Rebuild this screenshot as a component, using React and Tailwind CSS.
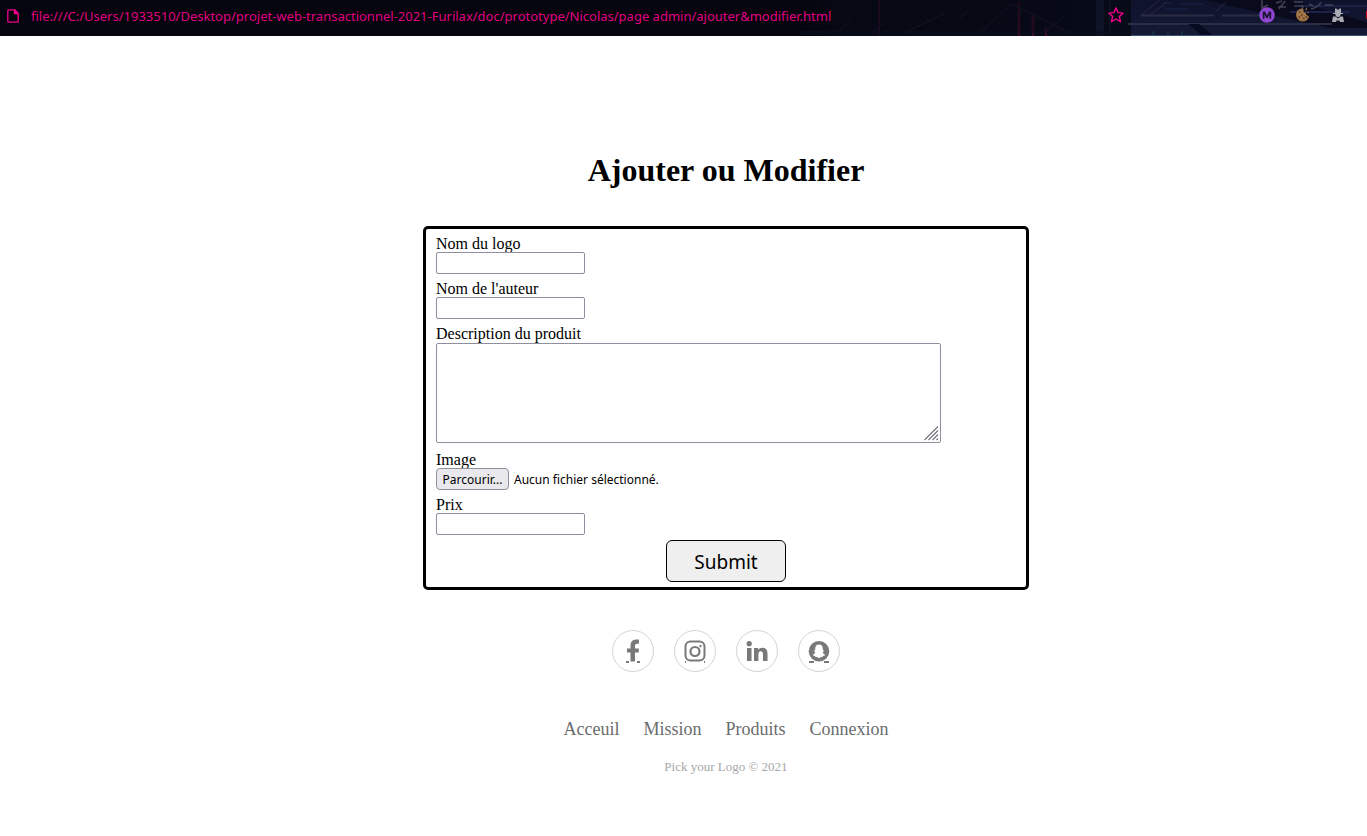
import React from "react";

const serif = "font-['Liberation_Serif','Times_New_Roman',serif]";
const sans = "font-['Noto_Sans','Open_Sans',sans-serif]";
const fieldBorder = "rounded-[2px] border border-[#8f8f9d] bg-white";
const labelText = "h-[18px] leading-5";

function Skyline() {
  return (
    <svg className="absolute right-0 top-0 h-9 w-[567px]" viewBox="800 0 567 36" preserveAspectRatio="none" aria-hidden="true">
      <defs>
        <linearGradient id="night" x1="0" x2="1" y1="0" y2="0">
          <stop offset="0" stopColor="#04050e" />
          <stop offset="0.12" stopColor="#060813" />
          <stop offset="1" stopColor="#070a17" />
        </linearGradient>
        <linearGradient id="dusk" x1="0" x2="0" y1="0" y2="1">
          <stop offset="0" stopColor="#0e122b" />
          <stop offset="1" stopColor="#151a36" />
        </linearGradient>
      </defs>
      <rect x="800" width="331" height="36" fill="url(#night)" />
      <path d="M838 32L852 19M872 33L882 24M904 33L945 13M980 33L1012 3M1044 33L1064 17M960 18l10-9" stroke="#121522" />
      <path d="M879 0V36" stroke="#1a0a20" strokeWidth="2" />
      <path d="M1019 3V31M1033 15V31M1046 28V31" stroke="#200a1c" strokeWidth="3" />
      <path d="M1019 31V36M1033 31V36M1046 31V36" stroke="#6d0a2b" strokeWidth="2" />
      <path d="M1012 4L1075 36" stroke="#0d0f1d" strokeWidth="2" />
      <rect x="1096" width="8" height="36" fill="#0c1425" />
      <rect x="1109" width="2" height="36" fill="#0b1222" />
      <rect x="800" y="31" width="331" height="4" fill="#0b0d20" opacity=".7" />
      <rect x="1131" width="236" height="36" fill="url(#dusk)" />
      <path d="M1205 0H1290L1367 22V28H1330L1240 8Z" fill="#090b1c" />
      <path d="M1290 12h60M1300 6h67" stroke="#1b2148" strokeWidth="2" />
      <path d="M1140 16L1160 0M1150 15L1167 2M1216 11L1226 2" stroke="#302444" />
      <path d="M1141 15.500H1214M1222 15.500H1260" stroke="#292c43" strokeWidth="2" />
      <path d="M1128 24H1332" stroke="#2b2d43" strokeWidth="2" />
      <path d="M1188 24L1203 36H1214L1199 24Z" fill="#070b21" />
      <path d="M1153 31v4M1168 31v4M1182 31v4" stroke="#154253" />
      <path d="M1163 3h10M1180 4h24M1165 9h24" stroke="#192248" />
      <g stroke="#424253" strokeWidth="1.500" fill="none">
        <path d="M1262 0v8l6-3M1276 3l6-2M1278 7h8M1285 1l-6 8M1294 2h9M1294 6h9q0 4-6 5M1309 4l4 2M1311 9q8-2 10-7M1325 5h8" />
      </g>
      <path d="M1131 35.500H1367" stroke="#3a5271" />
    </svg>
  );
}

function AddressBar() {
  return (
    <header className="relative flex h-9 items-center overflow-hidden bg-[#04050e]">
      <Skyline />
      <div className="relative flex min-w-0 flex-1 items-center pb-1 pl-[7px]">
        <svg className="mr-3 h-[14px] w-3 shrink-0" viewBox="0 0 12 14" fill="none" stroke="#f5008c" strokeWidth="1.300" strokeLinejoin="round" aria-hidden="true">
          <path d="M2 .8H7.500L11.200 4.500V12q0 1.200-1.200 1.200H2Q.8 13.200.8 12V2Q.8.8 2 .8Z" />
          <path d="M7.500 1V4.500H11Z" fill="#f5008c" />
        </svg>
        <span className={`truncate text-[13px] leading-5 text-[#e00080] ${sans}`}>
          file:///C:/Users/1933510/Desktop/projet-web-transactionnel-2021-Furilax/doc/prototype/Nicolas/page admin/ajouter&amp;modifier.html
        </span>
      </div>
      <div className="relative flex shrink-0 items-center pb-[6px]">
        <button type="button" aria-label="Marquer cette page" className="mr-[135px]">
          <svg className="size-4" viewBox="0 0 16 16" fill="none" stroke="#f5008c" strokeWidth="1.400" strokeLinejoin="round">
            <path d="M8 .9l2.100 4.700 5.100.5-3.800 3.500 1.100 5L8 12l-4.500 2.600 1.100-5L.8 6.100l5.100-.5Z" />
          </svg>
        </button>
        <button type="button" aria-label="Compte M" className="mr-5">
          <svg className="size-4" viewBox="0 0 16 16">
            <circle cx="8" cy="8" r="7.800" fill="#9146d2" />
            <path d="M3.800 11.800V4.500H6L8 8.500l2-4h2.200v7.300h-1.700V7.500L8.700 11H7.300L5.500 7.500v4.300Z" fill="#1d1630" />
          </svg>
        </button>
        <button type="button" aria-label="Cookies" className="mr-5">
          <svg className="size-4" viewBox="0 0 16 16">
            <path d="M8 1.500Q9 3 8.500 5q1 1 2.500.8Q10.500 8 12.500 8.500l1.500 1Q12.500 14.500 7.500 14.500A6.500 6.500 0 0 1 1 8Q1.200 2 8 1.500Z" fill="#a07445" />
            <path d="M4 5h1.500M6 8h1.500M3.500 10H5M8 11.500h1.500M10.500 10H12" stroke="#593b2b" strokeWidth="1.400" />
            <path d="M10.500 2.500h1.500M12.500 5.500H14M11 1l1 .5" stroke="#805c3c" strokeWidth="1.300" />
          </svg>
        </button>
        <button type="button" aria-label="Extension" className="mr-[21px]">
          <svg className="h-4 w-[14px]" viewBox="0 0 14 16" fill="#a9acb2">
            <path d="M4 1.500h1.500L6 2.500h2l.5-1H10V6h2v1H2V6h2ZM4.500 7h5v1.500L8 10H6L4.500 8.500ZM2 9.500h2.500L7 11.500l2.500-2H12L13 15H9L8.500 13.500h-3L5 15H1Z" />
          </svg>
        </button>
        <span className="h-2 w-px rounded-l-full bg-[#d00018]" />
      </div>
    </header>
  );
}

function TextField({ id, label }) {
  return (
    <div className="flex flex-col items-start">
      <label htmlFor={id} className={labelText}>{label}</label>
      <input id={id} name={id} type="text" className={`h-[22px] w-[149px] px-1 text-[13px] ${fieldBorder} ${sans}`} />
    </div>
  );
}

function ProductForm() {
  return (
    <form className="flex w-full max-w-[606px] flex-col gap-[5px] rounded-[5px] border-[3px] border-black px-[10px] py-[5px] text-base text-black" onSubmit={(e) => e.preventDefault()}>
      <TextField id="logo" label="Nom du logo" />
      <TextField id="auteur" label="Nom de l'auteur" />
      <div className="flex flex-col items-start gap-px pb-[2px]">
        <label htmlFor="description" className={labelText}>Description du produit</label>
        <div className="relative w-full max-w-[505px]">
          <textarea id="description" name="description" className={`block h-[100px] w-full resize-none p-1 text-[13px] ${fieldBorder} ${sans}`} />
          <svg className="pointer-events-none absolute bottom-[2px] right-[2px] size-[15px]" viewBox="0 0 15 15" stroke="#77777c" strokeWidth="1.200" aria-hidden="true">
            <path d="M.5 14 14 .5M4.500 14 14 4.500M8.500 14 14 8.500M12.500 14l1.500-1.500" />
          </svg>
        </div>
      </div>
      <div className="flex flex-col items-start">
        <span id="image-title" className={labelText}>Image</span>
        <div className={`relative flex items-center gap-[5px] text-xs ${sans}`}>
          <input id="image" name="image" type="file" aria-labelledby="image-title" className="peer sr-only" />
          <label htmlFor="image" className="flex h-[22px] w-[73px] items-center justify-center whitespace-nowrap rounded-[4px] border border-[#8f8f9d] bg-[#e9e9ed] pt-px">Parcourir...</label>
          <span className="pt-px">Aucun fichier sélectionné.</span>
        </div>
      </div>
      <TextField id="prix" label="Prix" />
      <button type="submit" className={`h-[42px] w-[120px] self-center rounded-[6px] border border-black bg-[#efefef] pt-[2px] text-[19px] ${sans}`}>Submit</button>
    </form>
  );
}

const socials = [
  {
    name: "Facebook",
    art: (
      <>
        <path d="M18.500 31.500V22.500H15V18.500h3.500V15.500q0-6 5.700-6H27v4.200h-2q-2 0-2 2v2.800H26.800v4H23v9Z" />
        <path d="M14 31h3v2h-3ZM25 31h3v2h-3Z" />
      </>
    ),
  },
  {
    name: "Instagram",
    art: (
      <>
        <rect x="11.500" y="11.500" width="19" height="19" rx="5" fill="none" stroke="#77797b" strokeWidth="2" />
        <circle cx="21" cy="21.500" r="4.500" fill="none" stroke="#77797b" strokeWidth="2.200" />
        <circle cx="26.500" cy="16" r="1.200" />
        <path d="M11 31h1v2h-1ZM30 31h1v2h-1Z" />
      </>
    ),
  },
  {
    name: "LinkedIn",
    art: (
      <>
        <circle cx="13.200" cy="13.700" r="2.600" />
        <path d="M11 18h4.500v13H11ZM18 18h4.200v1.800q1.400-2.100 4-2.100 5.300 0 5.300 5.800V31H27V24.200q0-2.900-2.200-2.900-2.400 0-2.400 2.900V31H18Z" />
      </>
    ),
  },
  {
    name: "Snapchat",
    art: (
      <>
        <circle cx="21" cy="21.300" r="10.300" />
        <path d="M21 14.500q-3.600 0-3.800 4v1.700l-1.400.2q.2.900 1.500 1.500-.5 2-2.600 3 .7.900 2.400 1l.4 1.100 1.700-.1q.8 1 1.800 1t1.800-1l1.700.1.4-1.100q1.700-.1 2.400-1-2.100-1-2.600-3 1.300-.6 1.500-1.500l-1.400-.2v-1.700q-.2-4-3.800-4Z" fill="#fff" />
        <path d="M11 31h5v2h-5ZM26 31h5v2h-5Z" />
      </>
    ),
  },
];

const links = ["Acceuil", "Mission", "Produits", "Connexion"];

function Footer() {
  return (
    <footer className="flex flex-col items-center pt-10">
      <div className="flex gap-5">
        {socials.map(({ name, art }) => (
          <a key={name} href="#" aria-label={name} className="size-[42px] rounded-full border border-[#d4d4d4]">
            <svg className="-m-px size-[42px]" viewBox="0 0 42 42" fill="#77797b">{art}</svg>
          </a>
        ))}
      </div>
      <nav className="mt-[45px] flex gap-6 text-lg leading-6 text-[#6b6c6d]">
        {links.map((name) => (
          <a key={name} href="#">{name}</a>
        ))}
      </nav>
      <p className="mt-4 text-[13px] leading-5 text-[#a6a6a6]">Pick your Logo © 2021</p>
    </footer>
  );
}

export default function App() {
  return (
    <div className={`min-h-screen bg-white ${serif}`}>
      <AddressBar />
      <main className="flex flex-col items-center pb-10 pl-[85px] pt-[116px]">
        <h1 className="mb-[38px] text-[32px] font-bold leading-9 text-black">Ajouter ou Modifier</h1>
        <ProductForm />
        <Footer />
      </main>
    </div>
  );
}
